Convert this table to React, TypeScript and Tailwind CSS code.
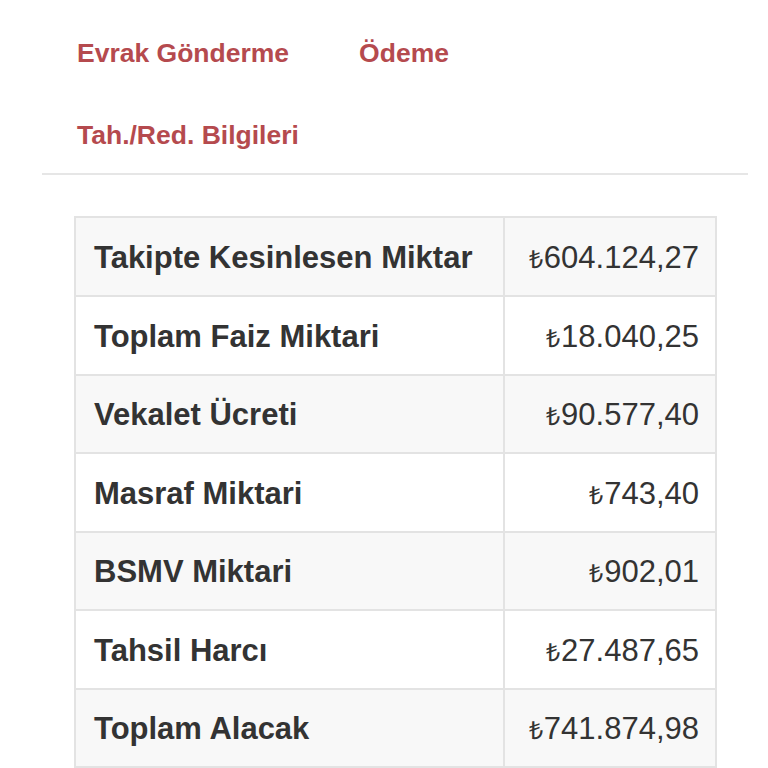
import React from "react";

const rows: [string, string][] = [
  ["Takipte Kesinlesen Miktar", "604.124,27"],
  ["Toplam Faiz Miktari", "18.040,25"],
  ["Vekalet Ücreti", "90.577,40"],
  ["Masraf Miktari", "743,40"],
  ["BSMV Miktari", "902,01"],
  ["Tahsil Harcı", "27.487,65"],
  ["Toplam Alacak", "741.874,98"],
];

const navCls = "px-[35px] leading-[30px] text-[26.5px] font-bold text-[#b54a4e]";

export default function App() {
  return (
    <div
      className="w-[768px] h-[768px] overflow-hidden bg-white"
      style={{ fontFamily: '"Liberation Sans", Arial, sans-serif' }}
    >
      <div className="mx-[42px] w-[706px]">
        <div className="flex flex-col gap-[52px] pt-[38px] pb-[23px] border-b-2 border-[#e6e6e6]">
          <div className="flex">
            <div className={navCls}>Evrak Gönderme</div>
            <div className={navCls}>Ödeme</div>
          </div>
          <div className="flex">
            <div className={navCls}>Tah./Red. Bilgileri</div>
          </div>
        </div>
        <div className="mt-[41px] mx-[32px] w-[643px] border-2 border-[#e3e3e3]">
          {rows.map(([k, v], i) => (
            <div
              key={k}
              className={`flex ${i > 0 ? "h-[78.5px] border-t-2 border-[#e3e3e3]" : "h-[77px]"} ${i % 2 === 0 ? "bg-[#f8f8f8]" : "bg-white"}`}
            >
              <div className="w-[429px] border-r-2 border-[#e3e3e3] pl-[18px] pt-[3px] flex items-center text-[31px] font-bold text-[#333333]">
                {k}
              </div>
              <div className="flex-1 pr-[16px] pt-[3px] flex items-baseline justify-end self-center text-[31px] text-[#333333]">
                <span className="text-[25px] mr-[1px]">₺</span>
                <span>{v}</span>
              </div>
            </div>
          ))}
        </div>
      </div>
    </div>
  );
}
